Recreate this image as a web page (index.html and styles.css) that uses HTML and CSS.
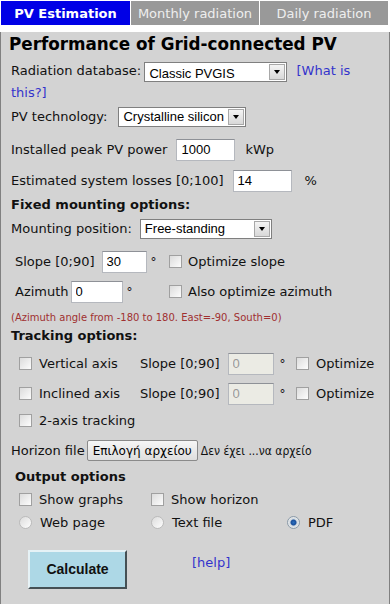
FILE: index.html
```html
<!DOCTYPE html>
<html lang="en">
<head>
    <meta charset="UTF-8">
    <meta name="viewport" content="width=device-width, initial-scale=1.0">
    <title>PVGIS - PV Estimation</title>
    <link rel="stylesheet" href="styles.css">
</head>
<body>
    <div class="tabs">
        <div class="tab active">PV Estimation</div>
        <div class="tab">Monthly radiation</div>
        <div class="tab">Daily radiation</div>
    </div>
    <div class="panel">
        <h1 class="title">Performance of Grid-connected PV</h1>

        <div class="row-flow">
            <span>Radiation database:</span>
            <span class="sel sel-db"><select><option>Classic PVGIS</option></select><span class="arrow"></span></span>
            <a class="link link-what" href="#">[What is this?]</a>
        </div>

        <div class="row r-tech">
            <span>PV technology:</span>
            <span class="sel sel-tech"><select><option>Crystalline silicon</option></select><span class="arrow"></span></span>
        </div>

        <div class="row r-peak">
            <span>Installed peak PV power</span>
            <input class="field w-peak" type="text" value="1000">
            <span class="unit">kWp</span>
        </div>

        <div class="row r-loss">
            <span>Estimated system losses [0;100]</span>
            <input class="field w-peak" type="text" value="14">
            <span class="unit unit-pct">%</span>
        </div>

        <div class="section r-fixed">Fixed mounting options:</div>

        <div class="row r-mount">
            <span>Mounting position:</span>
            <span class="sel sel-mount"><select><option>Free-standing</option></select><span class="arrow"></span></span>
        </div>

        <div class="angles">
            <div class="cell">
                <span>Slope [0;90]</span>
                <input class="field w-slope" type="text" value="30">
                <span class="deg">°</span>
            </div>
            <label class="cell"><input class="cb" type="checkbox"> Optimize slope</label>
            <div class="cell">
                <span>Azimuth</span>
                <input class="field w-azi" type="text" value="0">
                <span class="deg">°</span>
            </div>
            <label class="cell"><input class="cb" type="checkbox"> Also optimize azimuth</label>
        </div>

        <div class="note">(Azimuth angle from -180 to 180. East=-90, South=0)</div>

        <div class="section r-track">Tracking options:</div>

        <div class="tracking">
            <label class="cell"><input class="cb" type="checkbox"> Vertical axis</label>
            <div class="cell">
                <span>Slope [0;90]</span>
                <input class="field w-track" type="text" value="0" disabled>
                <span class="deg">°</span>
            </div>
            <label class="cell"><input class="cb" type="checkbox"> Optimize</label>

            <label class="cell"><input class="cb" type="checkbox"> Inclined axis</label>
            <div class="cell">
                <span>Slope [0;90]</span>
                <input class="field w-track" type="text" value="0" disabled>
                <span class="deg">°</span>
            </div>
            <label class="cell"><input class="cb" type="checkbox"> Optimize</label>

            <label class="cell r-2axis"><input class="cb" type="checkbox"> 2-axis tracking</label>
        </div>

        <div class="row r-horizon">
            <span>Horizon file</span>
            <button class="file-btn" type="button">Επιλογή αρχείου</button>
            <span class="file-name">Δεν έχει ...να αρχείο</span>
        </div>

        <div class="section r-output">Output options</div>

        <div class="output">
            <label class="cell"><input class="cb" type="checkbox"> Show graphs</label>
            <label class="cell"><input class="cb" type="checkbox"> Show horizon</label>
            <span></span>
            <label class="cell"><input class="rb" type="radio" name="out"> Web page</label>
            <label class="cell"><input class="rb" type="radio" name="out"> Text file</label>
            <label class="cell"><input class="rb" type="radio" name="out" checked> PDF</label>
        </div>

        <div class="actions">
            <button class="calc" type="button">Calculate</button>
            <a class="link" href="#">[help]</a>
        </div>
    </div>
</body>
</html>
```

FILE: styles.css
```css
/* base */
body {
    margin: 0;
    font-family: "DejaVu Sans", Verdana, sans-serif;
    font-size: 13px;
    color: #111;
    width: 390px;
    height: 604px;
    background: #fff;
}

/* onglets du haut */
.tabs {
    display: flex;
    gap: 1px;
    padding: 1px 1px 0 1px;
    height: 24px;
    background: #fff;
}
.tab {
    flex: 0 0 128px;
    display: flex;
    align-items: center;
    justify-content: center;
    background: #999;
    color: #eee;
    font-size: 13px;
}
.tab.active {
    flex-basis: 129px;
    background: #0000e6;
    color: #fff;
    font-weight: bold;
}

/* panneau gris */
.panel {
    height: 578px;
    box-sizing: border-box;
    background: #d3d3d3;
    border: 1px solid #808080;
    border-top: none;
    padding: 0 8px 0 10px;
}
.title {
    margin: 7px 0 0 -2px;
    font-size: 16.8px;
    line-height: 24px;
    font-weight: bold;
    color: #000;
}

.row {
    display: flex;
    align-items: center;
    height: 24px;
    white-space: nowrap;
}
.row-flow {
    margin-top: 4px;
    line-height: 21px;
}
.r-tech { margin-top: 2px; gap: 11px; }
.r-peak { margin-top: 9px; gap: 9px; }
.r-loss { margin-top: 7px; gap: 9px; }
.r-mount { margin-top: 2px; gap: 8px; }
.r-horizon { margin-top: 7px; gap: 2px; }

.section {
    font-weight: bold;
    height: 20px;
    line-height: 20px;
}
.r-fixed { margin-top: 2px; }
.r-track { margin-top: 1px; }
.r-output { margin-top: 4px; padding-left: 4px; }

.link {
    color: #3333cc;
    text-decoration: none;
}
.link-what { margin-left: 5px; }

/* listes déroulantes */
.sel {
    position: relative;
    display: inline-block;
    height: 20px;
    vertical-align: middle;
    box-sizing: border-box;
    border: 1px solid #7f7f7f;
    background: #fff;
}
.sel select {
    appearance: none;
    -webkit-appearance: none;
    border: none;
    background: transparent;
    font-family: "Liberation Sans", Arial, sans-serif;
    font-size: 13px;
    color: #000;
    height: 18px;
    width: 100%;
    padding: 0 0 0 4px;
    outline: none;
}
.sel .arrow {
    position: absolute;
    top: 1px;
    right: 1px;
    width: 14px;
    height: 14px;
    border: 1px solid #a8a8a8;
    background: linear-gradient(#f4f4f4, #d8d8d8);
}
.sel .arrow::after {
    content: "";
    position: absolute;
    left: 4px;
    top: 5px;
    border-left: 3px solid transparent;
    border-right: 3px solid transparent;
    border-top: 4px solid #000;
}
.sel-db { width: 143px; margin-left: -1px; }
.sel-tech { width: 128px; }
.sel-mount { width: 132px; }

/* champs texte */
.field {
    box-sizing: border-box;
    height: 22px;
    border: 1px solid #b5b8be;
    border-top-color: #8e9197;
    background: #fff;
    font-family: "Liberation Sans", Arial, sans-serif;
    font-size: 13px;
    padding: 0 4px;
    color: #000;
}
.field:disabled {
    background: #ebebe4;
    color: #999;
}
.w-peak { width: 59px; }
.w-slope { width: 45px; margin-left: 3px; }
.w-azi { width: 52px; margin-left: -2px; }
.w-track { width: 46px; margin-left: 4px; }
.unit { margin-left: 1px; }
.unit-pct { margin-left: 4px; }
.deg { font-size: 12px; }
.tracking .deg { margin-left: 2px; }

/* cases à cocher et boutons radio */
.cb, .rb {
    appearance: none;
    -webkit-appearance: none;
    width: 13px;
    height: 13px;
    margin: 0 6px 0 0;
    border: 1px solid #a0a0a0;
    background: linear-gradient(135deg, #dcdcdc, #fdfdfd);
    flex: none;
}
.rb {
    border-radius: 50%;
    border-color: #bbb;
    margin-right: 8px;
}
.rb:checked {
    background: radial-gradient(circle, #2a6fc0 0, #1a4f9a 2.5px, #cfd8e0 3.5px, #eee 6px);
    border-color: #8a9aa8;
}

.cell {
    display: flex;
    align-items: center;
    gap: 4px;
    white-space: nowrap;
}
label.cell { gap: 0; }

/* pente et azimut */
.angles {
    display: grid;
    grid-template-columns: 154px auto;
    grid-auto-rows: 24px;
    row-gap: 6px;
    margin-top: 9px;
    padding-left: 4px;
}

.note {
    margin-top: 7px;
    height: 14px;
    line-height: 14px;
    font-size: 10px;
    color: #a03030;
}

/* suivi */
.tracking {
    display: grid;
    grid-template-columns: 121px 156px auto;
    grid-template-rows: 24px 24px 20px;
    row-gap: 6px;
    margin-top: 6px;
    padding-left: 8px;
}
.tracking .cb { margin-right: 7px; }
.r-2axis { margin-top: -2px; }

.file-btn {
    height: 21px;
    padding: 0 5px;
    border: 1px solid #8a8a8a;
    border-radius: 2px;
    background: linear-gradient(#f6f6f6, #dedede);
    font-family: "DejaVu Sans", Verdana, sans-serif;
    font-size: 12px;
    color: #000;
}
.file-name {
    font-family: "DejaVu Sans Condensed", "DejaVu Sans", sans-serif;
    font-size: 12px;
    margin-left: 1px;
}

/* options de sortie */
.output {
    display: grid;
    grid-template-columns: 132px 136px auto;
    grid-auto-rows: 20px;
    row-gap: 3px;
    margin-top: 3px;
    padding-left: 8px;
}
.output .cb { margin-right: 7px; }

/* bouton de calcul */
.actions {
    display: flex;
    align-items: flex-start;
    margin-top: 17px;
    padding-left: 17px;
}
.calc {
    width: 99px;
    height: 39px;
    background: #add8e6;
    border: 2px outset #e6f2f6;
    border-right-color: #8aa0a8;
    border-bottom-color: #8aa0a8;
    font-family: "Liberation Sans", Arial, sans-serif;
    font-size: 14px;
    font-weight: bold;
    color: #111;
    cursor: pointer;
}
.actions .link {
    margin: 5px 0 0 65px;
}
```
